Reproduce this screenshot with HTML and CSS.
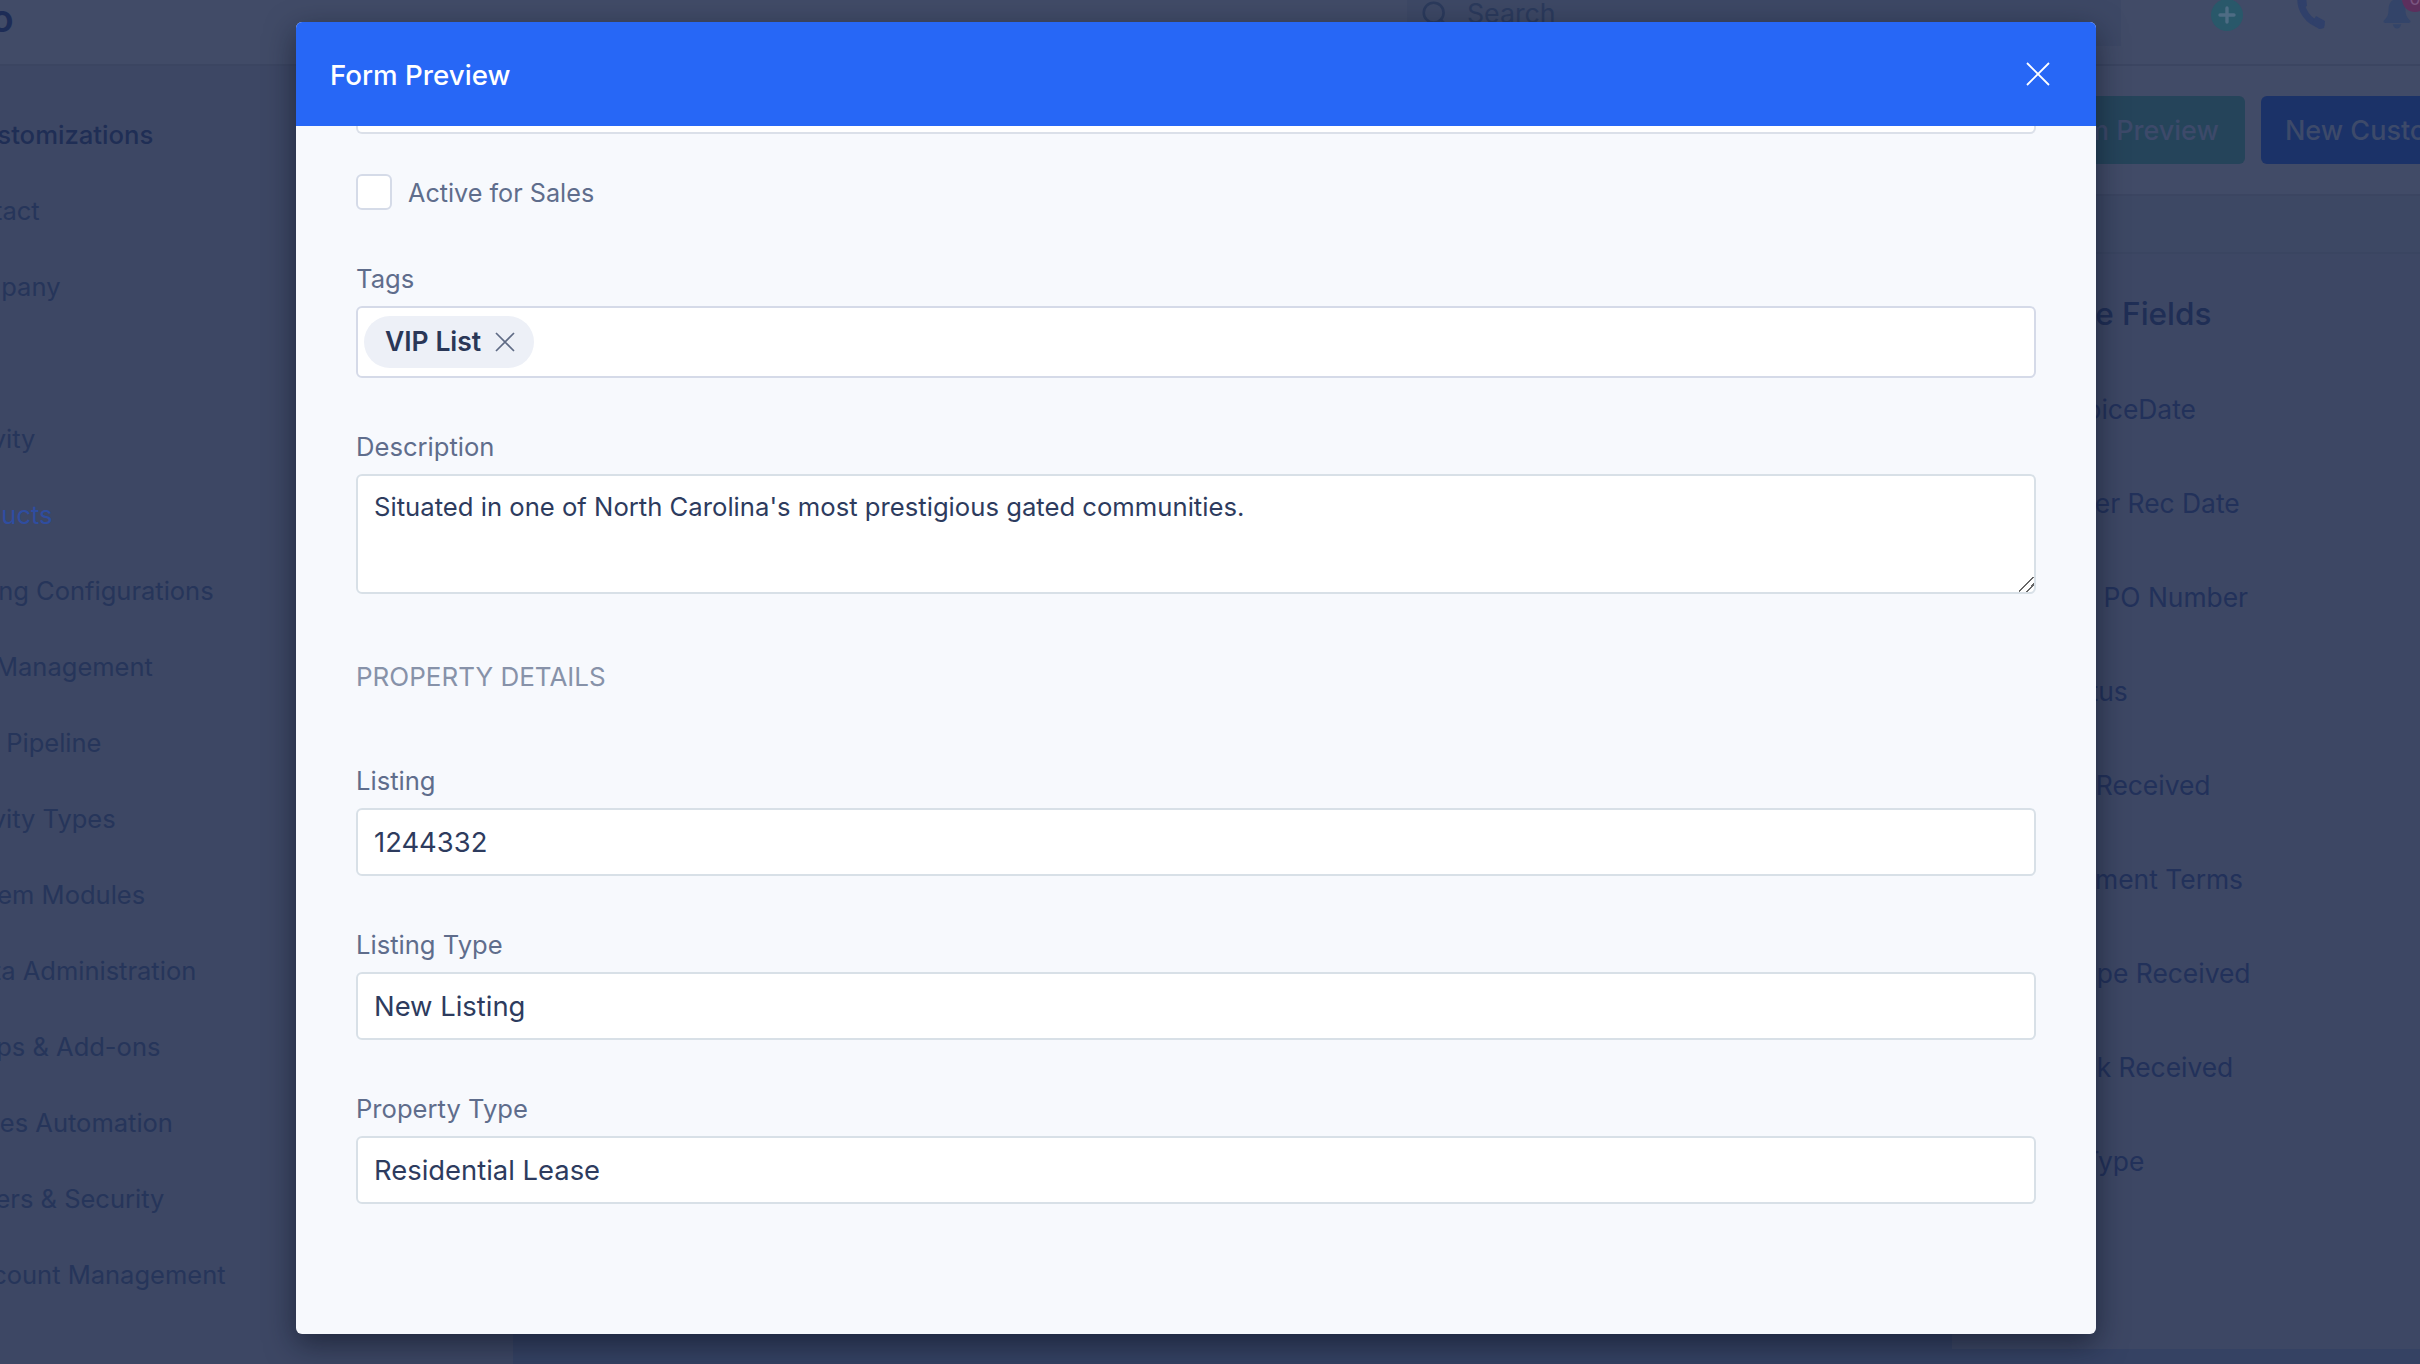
FILE: index.html
```html
<!DOCTYPE html>
<html lang="en">
<head>
<meta charset="utf-8">
<title>Form Preview</title>
<link rel="stylesheet" href="styles.css">
</head>
<body>
<div class="app">
  <header class="topbar">
    <div class="logo">Logo</div>
    <div class="search">
      <svg class="search-icon" viewBox="0 0 24 24" fill="none" stroke="currentColor" stroke-width="2.200" stroke-linecap="round"><circle cx="10" cy="10" r="8.500"/><path d="M16.500 16.500l6 6"/></svg>
      <span>Search</span>
    </div>
    <div class="top-icons">
      <svg class="ic-plus" viewBox="0 0 32 32"><circle cx="16" cy="16" r="16" fill="#29586a"/><path d="M16 9v14M9 16h14" stroke="#4e6c84" stroke-width="3.400" stroke-linecap="round"/></svg>
      <svg class="ic-phone" viewBox="0 0 30 30" fill="none"><path d="M5-2C3.500 10 12 23 25 26" stroke="#30406a" stroke-width="7" stroke-linecap="round"/><path d="M1-3h9l1 10-6 3zM16 24l4-7 9 5-1 7-5 1z" fill="#30406a"/></svg>
      <div class="bell-wrap">
        <svg class="ic-bell" viewBox="0 0 30 32"><path d="M15 0c-6 0-9 5-9 11 0 7-2 9-5 12-1 1.500 0 2.500 1.500 2.500h25c1.500 0 2.500-1 1.500-2.500-3-3-5-5-5-12 0-6-3-11-9-11z" fill="#334469"/><path d="M10.500 27c.5 3 2.500 4.500 4.500 4.500s4-1.500 4.500-4.500z" fill="#334469"/></svg>
        <span class="badge">0</span>
      </div>
    </div>
  </header>
  <div class="workspace">
    <nav class="sidebar">
      <div class="nav-title">Customizations</div>
      <div class="nav-item nav-deep">Contact</div>
      <div class="nav-item nav-deep">Company</div>
      <div class="nav-gap"></div>
      <div class="nav-item nav-deep">Activity</div>
      <div class="nav-item nav-deep nav-active">Products</div>
      <div class="nav-item nav-deep">Pricing Configurations</div>
      <div class="nav-item nav-deep">Tax Management</div>
      <div class="nav-item nav-deep">Deal Pipeline</div>
      <div class="nav-item nav-deep">Activity Types</div>
      <div class="nav-item nav-deep">System Modules</div>
      <div class="nav-item nav-mid">Data Administration</div>
      <div class="nav-item">Apps &amp; Add-ons</div>
      <div class="nav-item">Sales Automation</div>
      <div class="nav-item">Users &amp; Security</div>
      <div class="nav-item nav-mid">Account Management</div>
    </nav>
    <main class="main">
      <div class="toolbar">
        <button class="btn btn-teal">Form Preview</button>
        <button class="btn btn-blue">New Custom Field</button>
      </div>
      <div class="tabs"></div>
      <section class="fields-panel">
        <h2 class="fields-title">Sale Fields</h2>
        <div class="fields-item">InvoiceDate</div>
        <div class="fields-item">Order Rec Date</div>
        <div class="fields-item">Job PO Number</div>
        <div class="fields-item">Status</div>
        <div class="fields-item">Lot Received</div>
        <div class="fields-item">Payment Terms</div>
        <div class="fields-item">Scope Received</div>
        <div class="fields-item">Bank Received</div>
        <div class="fields-item">ID Type</div>
      </section>
    </main>
  </div>
</div>

<div class="modal">
  <div class="modal-head">
    <span class="modal-title">Form Preview</span>
    <svg class="modal-close" viewBox="0 0 24 24" fill="none" stroke="#fff" stroke-width="1.800"><path d="M1 1l22 22M23 1L1 23"/></svg>
  </div>
  <div class="modal-body">
    <div class="clipped-input"></div>
    <label class="check-row">
      <span class="checkbox"></span>
      <span class="check-label">Active for Sales</span>
    </label>
    <div class="field">
      <div class="label">Tags</div>
      <div class="tag-input">
        <span class="chip"><span class="chip-text">VIP List</span>
          <svg class="chip-x" viewBox="0 0 20 20" fill="none" stroke="#5f6b85" stroke-width="1.700"><path d="M1 1l18 18M19 1L1 19"/></svg>
        </span>
      </div>
    </div>
    <div class="field">
      <div class="label">Description</div>
      <textarea class="textarea">Situated in one of North Carolina's most prestigious gated communities.</textarea>
    </div>
    <div class="section-label">PROPERTY DETAILS</div>
    <div class="field field-first">
      <div class="label">Listing</div>
      <div class="input">1244332</div>
    </div>
    <div class="field">
      <div class="label">Listing Type</div>
      <div class="input">New Listing</div>
    </div>
    <div class="field">
      <div class="label">Property Type</div>
      <div class="input">Residential Lease</div>
    </div>
  </div>
</div>
</body>
</html>
```
FILE: styles.css
```css
* { box-sizing: border-box; }
html, body { margin: 0; height: 100%; }
body {
  position: relative;
  width: 2420px;
  height: 1364px;
  overflow: hidden;
  background: #3d4764;
  font-family: Inter, "Noto Sans", sans-serif;
  color: #1f2e55;
}

/* dimmed page behind the dialog */
.app { display: flex; flex-direction: column; margin-top: -20px; height: 1384px; }
.topbar {
  flex: none;
  height: 86px;
  display: flex;
  align-items: flex-start;
  background: #414b67;
  border-bottom: 2px solid #3b4561;
}
.logo {
  width: 1407px;
  margin-left: -78px;
  padding-top: 15px;
  flex: none;
  font-size: 38px;
  line-height: 46px;
  font-weight: 600;
  color: #1d2c56;
}
.search {
  flex: none;
  width: 714px;
  margin-left: 78px;
  height: 66px;
  padding-left: 15px;
  display: flex;
  align-items: center;
  gap: 17px;
  background: #3d4865;
  font-size: 26.700px;
  color: #2b3a5c;
}
.search-icon { width: 28px; height: 28px; flex: none; margin-top: 3px; }
.top-icons { flex: none; display: flex; padding-top: 19px; margin-left: 90px; }
.ic-plus { width: 32px; height: 32px; flex: none; }
.ic-phone { width: 30px; height: 30px; margin-left: 53px; flex: none; overflow: visible; }
.bell-wrap { position: relative; width: 30px; height: 32px; margin-left: 56px; flex: none; }
.ic-bell { width: 30px; height: 30px; display: block; }
.badge {
  position: absolute;
  top: -13px;
  left: 20px;
  width: 26px;
  height: 26px;
  border-radius: 50%;
  background: #5c2f5d;
  color: #7a5580;
  font-size: 18px;
  line-height: 26px;
  text-align: center;
}

.workspace { flex: 1; display: flex; min-height: 0; }
.sidebar { flex: none; width: 513px; padding-top: 31px; }
.nav-title, .nav-item {
  height: 76px;
  line-height: 76px;
  white-space: nowrap;
  margin-left: -37px;
}
.nav-title { font-size: 25.700px; font-weight: 500; color: #1f2e55; }
.nav-item { font-size: 25.500px; color: #26355a; }
.nav-deep { margin-left: -55px; }
.nav-mid { margin-left: -40px; }
.nav-active { color: #2f4da0; }
.nav-gap { height: 76px; }

.main { flex: 1; min-width: 0; display: flex; flex-direction: column; background: #354263; overflow: hidden; }
.toolbar {
  flex: none;
  height: 130px;
  padding: 30px 0 0 1504px;
  display: flex;
  gap: 16px;
  background: #414b67;
  border-bottom: 2px solid #3b4561;
  white-space: nowrap;
}
.btn {
  flex: none;
  height: 68px;
  border: 0;
  border-radius: 6px;
  padding: 0 26px;
  font: 500 27px Inter, sans-serif;
  color: #3d4a6a;
}
.btn-teal { background: #25445a; }
.btn-blue { background: #1b3268; padding-left: 24px; }
.tabs { flex: none; height: 58px; background: #3d4864; border-bottom: 2px solid #3a4561; }
.fields-panel { flex: none; height: 1095px; margin-left: 1439px; padding: 38px 0 0 97px; background: #3d4764; }
.fields-title { margin: 0 0 26px; font-size: 31.500px; line-height: 44px; font-weight: 500; color: #1f2e55; white-space: nowrap; }
.fields-item { height: 94px; line-height: 94px; font-size: 26.400px; color: #22315a; white-space: nowrap; }

/* dialog */
.modal {
  position: absolute;
  left: 296px;
  top: 22px;
  width: 1800px;
  height: 1312px;
  border-radius: 6px;
  overflow: hidden;
  background: #f7f9fd;
  box-shadow: 0 10px 30px rgba(10, 15, 30, .55);
  display: flex;
  flex-direction: column;
}
.modal-head {
  flex: none;
  height: 104px;
  padding: 0 46px 0 34px;
  display: flex;
  align-items: center;
  justify-content: space-between;
  background: #2767f6;
}
.modal-title { font-size: 27.700px; font-weight: 500; color: #fff; margin-top: 2px; }
.modal-close { width: 24px; height: 24px; margin-top: 0; }
.modal-body { flex: 1; padding: 0 60px; min-height: 0; }
.clipped-input {
  height: 8px;
  background: #fff;
  border: 2px solid #dbe0e9;
  border-top: 0;
  border-radius: 0 0 6px 6px;
}
.check-row { display: flex; align-items: center; gap: 16px; margin-top: 40px; height: 36px; }
.checkbox {
  width: 36px;
  height: 36px;
  flex: none;
  background: #fff;
  border: 2px solid #d5dbe8;
  border-radius: 6px;
}
.check-label { font-size: 25.200px; line-height: 32px; color: #5f6d8c; padding-top: 2px; }
.label { font-size: 25.600px; line-height: 30px; color: #5f6d8c; height: 32px; margin-bottom: 10px; }
.field { margin-top: 54px; }
.field-first { margin-top: 73px; }
.tag-input {
  height: 72px;
  padding: 8px 6px;
  display: flex;
  background: #fff;
  border: 2px solid #d5dae8;
  border-radius: 6px;
}
.chip {
  height: 52px;
  padding: 0 19px 0 21px;
  display: flex;
  align-items: center;
  gap: 14px;
  border-radius: 26px;
  background: #edf0f7;
  font-size: 26.500px;
  font-weight: 600;
  color: #2a3757;
}
.chip-text { margin-top: -3px; }
.chip-x { width: 20px; height: 20px; flex: none; }
.textarea {
  display: block;
  width: 100%;
  height: 120px;
  padding: 13.500px 16px;
  background: #fff;
  border: 2px solid #d8e0e7;
  border-radius: 6px;
  outline: 0;
  resize: vertical;
  font: 400 25.660px/34px Inter, sans-serif;
  color: #2d3b5e;
}
.textarea::-webkit-resizer {
  background: linear-gradient(135deg, transparent 46%, #666 46%, #666 53%, transparent 53%, transparent 70%, #666 70%, #666 77%, transparent 77%);
}
.section-label { margin-top: 67px; font-size: 26px; line-height: 32px; color: #8792a9; }
.input {
  height: 68px;
  padding: 0 16px;
  display: flex;
  align-items: center;
  background: #fff;
  border: 2px solid #d8e0e7;
  border-radius: 6px;
  font-size: 27.400px;
  color: #2d3b5e;
}
```
